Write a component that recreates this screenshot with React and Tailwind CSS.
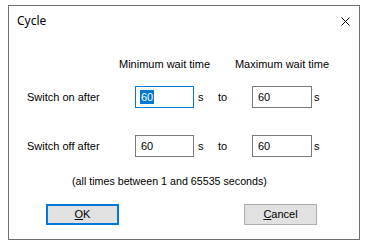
import React from "react";

const labelFont = { fontFamily: '"Liberation Sans", Arial, sans-serif' };

function TimeBox({ value, focused }) {
  return (
    <div
      className={`w-full h-[22px] border flex items-center pl-[4px] bg-white ${
        focused ? "border-[#0078d7]" : "border-[#7a7a7a]"
      }`}
    >
      {focused ? (
        <span className="bg-[#0078d7] text-white leading-[14px] px-[1px]">{value}</span>
      ) : (
        <span className="leading-[14px] px-[1px]">{value}</span>
      )}
    </div>
  );
}

function Row({ label, first, focused }) {
  return (
    <div className="grid grid-cols-[108px_59px_24px_34px_60px_auto] items-center h-[22px]">
      <span>{label}</span>
      <TimeBox value={first} focused={focused} />
      <span className="pl-[4px]">s</span>
      <span>to</span>
      <TimeBox value="60" />
      <span className="pl-[2px]">s</span>
    </div>
  );
}

export default function App() {
  return (
    <div className="w-[376px] h-[248px] bg-white pt-[5px] pl-[8px] text-black" style={labelFont}>
      <div className="w-[352px] h-[235px] border border-[#707070] bg-white flex flex-col">
        {/* barra de titulo */}
        <div className="h-[30px] flex items-center justify-between pl-[8px] pr-[9px]">
          <span className="text-[12px]" style={{ fontFamily: '"Noto Sans", sans-serif' }}>
            Cycle
          </span>
          <svg width="9" height="9" viewBox="0 0 9 9">
            <path d="M0.5 0.5 L8.5 8.5 M8.5 0.5 L0.5 8.5" stroke="#000" strokeWidth="1" />
          </svg>
        </div>

        <div className="pl-[18px] text-[11px]">
          <div className="grid grid-cols-[108px_59px_58px_60px] h-[13px] leading-[13px] mt-[22px]">
            <span></span>
            <div className="flex justify-center whitespace-nowrap">Minimum wait time</div>
            <span></span>
            <div className="flex justify-center whitespace-nowrap">Maximum wait time</div>
          </div>

          <div className="mt-[15px]">
            <Row label="Switch on after" first="60" focused />
          </div>
          <div className="mt-[27px]">
            <Row label="Switch off after" first="60" />
          </div>

          <div className="mt-[18px] h-[13px] leading-[13px] pl-[45px] whitespace-nowrap text-[10.7px]">
            (all times between 1 and 65535 seconds)
          </div>

          <div className="mt-[16px] flex">
            <button className="ml-[19px] w-[73px] h-[21px] border-2 border-[#0078d7] bg-[#e1e1e1] text-[11px] leading-none">
              <span className="underline underline-offset-1">O</span>K
            </button>
            <button className="ml-[125px] w-[73px] h-[21px] border border-[#adadad] bg-[#e1e1e1] text-[11px] leading-none">
              <span className="underline underline-offset-1">C</span>ancel
            </button>
          </div>
        </div>
      </div>
    </div>
  );
}
